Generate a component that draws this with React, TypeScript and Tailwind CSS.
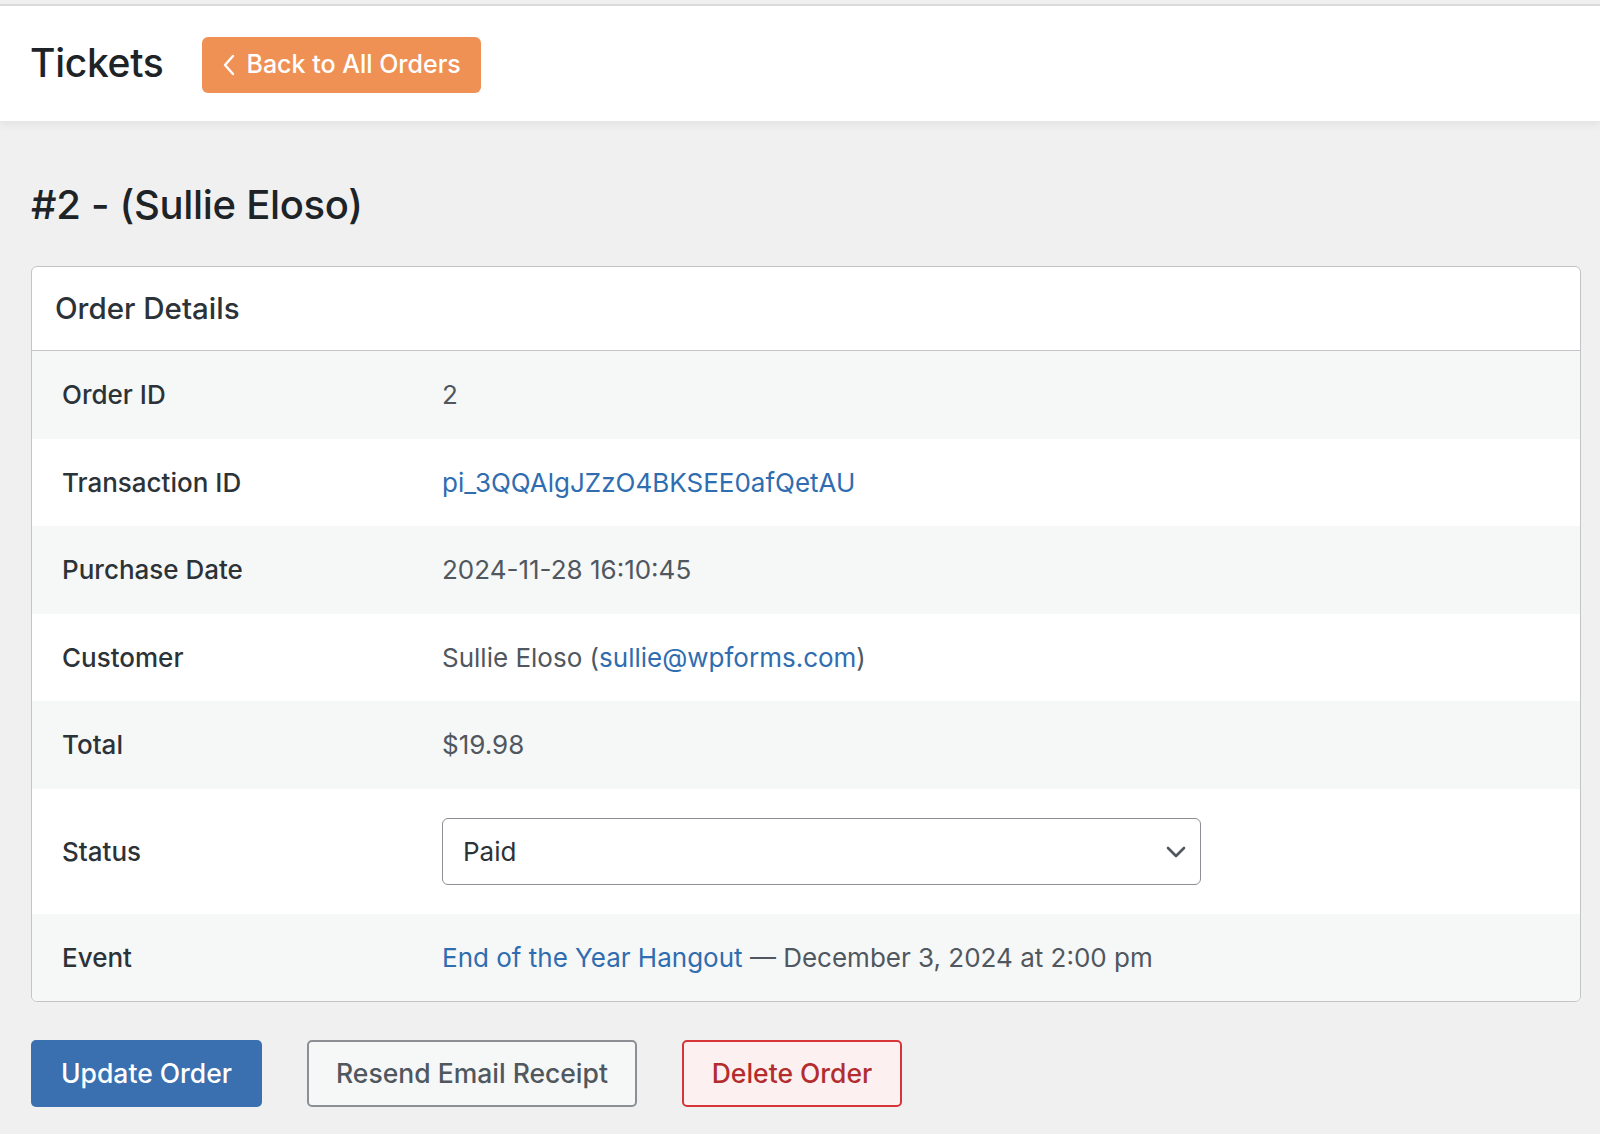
import React, { useState } from 'react';

const font = { fontFamily: 'Inter, "Noto Sans", "Liberation Sans", sans-serif' };

const Row: React.FC<{ label: string; alt?: boolean; tall?: boolean; children: React.ReactNode }> = ({ label, alt, tall, children }) => (
  <div className={`flex items-center px-[30px] ${tall ? 'h-[125px]' : 'h-[87.5px]'} ${alt ? 'bg-[#f6f7f7]' : 'bg-white'}`}>
    <div className="w-[380px] shrink-0 text-[26px] font-medium text-[#2c3338]">{label}</div>
    <div className="flex-1 text-[26px] text-[#50575e]">{children}</div>
  </div>
);

const App: React.FC = () => {
  const [status, setStatus] = useState('Paid');

  return (
    <div className="min-h-screen bg-[#f0f0f1]" style={font}>
      {/* top bar */}
      <div className="h-[4px] bg-[#f0f0f1]" />
      <div className="h-[2px] bg-[#dcdcde]" />
      <div className="flex items-center gap-[39px] bg-white pl-[30px] h-[116px] border-b border-[#e6e6e8] shadow-[0_3px_8px_rgba(0,0,0,0.06)]">
        <h1 className="text-[39px] font-medium text-[#1d2327] tracking-[-0.3px]">Tickets</h1>
        <button className="flex items-center gap-[10px] h-[56px] px-[20px] rounded-[6px] bg-[#ef9155] text-white text-[25px] font-medium mt-[2px]">
          <svg width="14" height="24" viewBox="0 0 14 24" fill="none" stroke="currentColor" strokeWidth="2.4" strokeLinecap="round" strokeLinejoin="round">
            <path d="M11 3 L3 12 L11 21" />
          </svg>
          Back to All Orders
        </button>
      </div>

      <div className="pl-[31px] pt-[63px] pb-[30px]">
        <h2 className="text-[40px] font-medium text-[#1d2327] leading-none tracking-[-0.3px]">#2 - (Sullie Eloso)</h2>

        <div className="mt-[41px] w-[1550px] bg-white border border-[#c3c4c7] rounded-[6px] overflow-hidden">
          <div className="h-[84px] flex items-center px-[23px] border-b border-[#c3c4c7] text-[29.5px] font-medium text-[#2c3338]">
            Order Details
          </div>
          <Row label="Order ID" alt>2</Row>
          <Row label="Transaction ID">
            <a className="text-[#2f6db0]" href="#">pi_3QQAlgJZzO4BKSEE0afQetAU</a>
          </Row>
          <Row label="Purchase Date" alt>2024-11-28 16:10:45</Row>
          <Row label="Customer">
            Sullie Eloso (<a className="text-[#2f6db0]" href="#">sullie@wpforms.com</a>)
          </Row>
          <Row label="Total" alt>$19.98</Row>
          <Row label="Status" tall>
            <div className="relative w-[759px]">
              <select
                value={status}
                onChange={(e) => setStatus(e.target.value)}
                className="w-full h-[67px] appearance-none rounded-[6px] border border-[#8c8f94] bg-white pl-[20px] text-[26px] text-[#2c3338] outline-none"
              >
                <option>Paid</option>
                <option>Pending</option>
                <option>Refunded</option>
              </select>
              <svg className="absolute right-[14px] top-[24px] pointer-events-none" width="22" height="20" viewBox="0 0 22 20" fill="none" stroke="#50575e" strokeWidth="2.6" strokeLinecap="round" strokeLinejoin="round">
                <path d="M3 6 L11 14 L19 6" />
              </svg>
            </div>
          </Row>
          <Row label="Event" alt>
            <a className="text-[#2f6db0]" href="#">End of the Year Hangout</a> — December 3, 2024 at 2:00 pm
          </Row>
        </div>

        <div className="flex gap-[45px] mt-[38px]">
          <button className="h-[67px] w-[231px] rounded-[5px] bg-[#3a6fb0] text-white text-[26.5px] font-medium">Update Order</button>
          <button className="h-[67px] w-[330px] rounded-[5px] border-2 border-[#8c8f94] bg-[#f6f7f7] text-[#50575e] text-[26.5px] font-medium">Resend Email Receipt</button>
          <button className="h-[67px] w-[220px] rounded-[5px] border-2 border-[#d63638] bg-[#fcf0f1] text-[#b32d2e] text-[26.5px] font-medium">Delete Order</button>
        </div>
      </div>
    </div>
  );
};

export default App;
